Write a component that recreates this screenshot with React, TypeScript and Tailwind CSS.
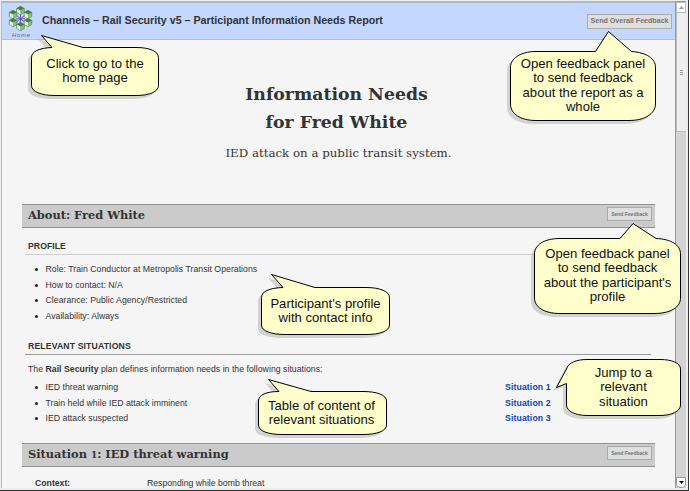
import type { ReactNode } from "react";

type CalloutProps = {
  box: string;
  text: string;
  width: number;
  height: number;
  path: string;
  children: ReactNode;
};

function Callout({ box, text, width, height, path, children }: CalloutProps) {
  return (
    <div className={`absolute ${box}`}>
      <svg width={width} height={height} className="absolute left-0 top-0 overflow-visible" fill="none">
        <path d={path} fill="#777" fillOpacity="0.27" transform="translate(-3.5 3.5)" />
        <path d={path} fill="#ffffcc" stroke="#000" strokeWidth="1" strokeLinejoin="miter" />
      </svg>
      <div className={`relative whitespace-nowrap text-center text-[13.1px] leading-[14.4px] text-[#111] ${text}`}>
        {children}
      </div>
    </div>
  );
}

function HomeLogo() {
  const cubes = [[20.5, 10.5], [13, 14.5], [28, 14.5], [13, 22.5], [28, 22.5], [20.5, 26.5]];
  return (
    <svg width="40" height="39" viewBox="0 0 40 39" className="shrink-0">
      <g stroke="#6457b8" strokeWidth="1">
        <path d="M20.5 13v11M16.500 15.500l8 6.500M24.500 15.500l-8 6.500M16 18.700h9" />
      </g>
      {cubes.map(([x, y]) => (
        <g key={`${x}-${y}`} transform={`translate(${x} ${y})`}>
          <path d="M0-4.200 3.900-2.100 3.700 2 0 4.200-3.700 2-3.900-2.100Z" fill="#5d9851" stroke="#517b55" strokeWidth=".6" />
          <path d="M0-4 3.600-2.100 0-.2-3.600-2.100Z" fill="#3f8230" />
          <path d="M-3.400-1.700 0 0V3.900L-3.400 1.900Z" fill="#e0f1dc" />
          <path d="M3.400-1.700 0 0V3.900L3.400 1.900Z" fill="#8fb88b" />
        </g>
      ))}
      <text x="12" y="36.5" fontFamily="Liberation Sans, sans-serif" fontSize="5.8" fontStyle="italic" fill="#59647a" textLength="18">Home</text>
    </svg>
  );
}

function SectionBar({ children }: { children: ReactNode }) {
  return (
    <div className="ml-5 flex h-6 w-[633px] shrink-0 items-center justify-between border-y border-[#929292] bg-[#cbcbcb] pl-[6px] pr-[3px]">
      <h2 className="font-['DejaVu_Serif',serif] text-[11.4px] font-bold leading-none text-[#333]">{children}</h2>
      <button className="mb-[4px] h-[14px] w-[45px] whitespace-nowrap border border-[#aaa] bg-[#dedede] text-[5px] font-bold leading-none text-[#737373]">Send Feedback</button>
    </div>
  );
}

function Bullet({ children }: { children: ReactNode }) {
  return (
    <li className="flex h-[15.6px] items-center">
      <span className="mr-[7.5px] size-[3px] rounded-full bg-[#222]" />
      <span>{children}</span>
    </li>
  );
}

export default function App() {
  return (
    <div className="relative h-[491px] w-[690px] overflow-hidden bg-white font-['Liberation_Sans',Arial,sans-serif] text-[#333]">
      <div className="flex h-[491px] w-[689px] border-b border-r border-[#333] bg-[#ececec] pl-px pt-px">
        <main className="flex h-[487px] w-[674px] flex-col overflow-hidden border-l border-t-2 border-l-[#bbb] border-t-[#adb7c5] bg-[#f5f5f5]">
          <header className="flex h-[37px] shrink-0 items-center border-b border-[#b3bfd1] bg-[#c3d7ff]">
            <div className="-mt-[3px] h-[39px] w-[40px] -translate-x-[2px]"><HomeLogo /></div>
            <h1 className="whitespace-nowrap pb-px text-[10.7px] font-bold">Channels – Rail Security v5 – Participant Information Needs Report</h1>
            <button className="ml-auto mr-[3px] h-[15px] w-[85px] whitespace-nowrap border border-[#aaa] bg-[#dedede] pt-px text-[7.1px] font-bold leading-none text-[#737373]">Send Overall Feedback</button>
          </header>
          <div className="flex h-[164px] shrink-0 flex-col items-center pt-[40px] text-center font-['DejaVu_Serif',serif]">
            <div className="-ml-[4px] text-[17.3px] font-bold leading-[28px]">Information Needs<br />for Fred White</div>
            <div className="mt-[7px] text-[11.8px] leading-5">IED attack on a public transit system.</div>
          </div>
          <SectionBar>About: Fred White</SectionBar>
          <section className="ml-[23px] mr-[24px] h-[110px] shrink-0 text-[8.7px] tracking-[0.03px]">
            <h3 className="flex h-[27px] items-end border-b border-[#cfcfcf] pb-px pl-[3px] font-bold">PROFILE</h3>
            <ul className="pl-[10px] pt-[7px]">
              <Bullet>Role: Train Conductor at Metropolis Transit Operations</Bullet>
              <Bullet>How to contact: N/A</Bullet>
              <Bullet>Clearance: Public Agency/Restricted</Bullet>
              <Bullet>Availability: Always</Bullet>
            </ul>
          </section>
          <section className="ml-[23px] mr-[24px] h-[105px] shrink-0 text-[8.7px] tracking-[0.03px]">
            <h3 className="flex h-[17px] items-end border-b border-[#999] pb-px pl-[3px] font-bold tracking-[0.12px]">RELEVANT SITUATIONS</h3>
            <p className="pl-[3px] pt-[8px] leading-[12px]">The <b>Rail Security</b> plan defines information needs in the following situations:</p>
            <div className="flex pl-[10px] pt-[5px]">
              <ul className="w-[470px]">
                <Bullet>IED threat warning</Bullet>
                <Bullet>Train held while IED attack imminent</Bullet>
                <Bullet>IED attack suspected</Bullet>
              </ul>
              <div className="font-bold leading-[15.6px] tracking-[0.12px] text-[#0d45b5]">
                <div>Situation 1</div><div>Situation 2</div><div>Situation 3</div>
              </div>
            </div>
          </section>
          <SectionBar>Situation <span className="text-[9px]">1</span>: IED threat warning</SectionBar>
          <div className="flex pl-[33px] pt-[11px] text-[8.7px] leading-[11px]">
            <b className="w-[112px]">Context:</b><span>Responding while bomb threat</span>
          </div>
        </main>
        <aside className="flex h-[487px] w-[11px] flex-col border-l border-t border-[#999] bg-[#d3d3d3]">
          <div className="flex h-[11px] items-center justify-center border border-[#bbb] bg-white">
            <svg width="5" height="3"><path d="M0 3 2.5 0 5 3" fill="#999" /></svg>
          </div>
          <div className="flex h-[119px] flex-col items-center justify-center gap-px border-b border-l border-[#bbb] bg-[#eee]">
            <i className="h-px w-[3px] bg-[#999]" /><i className="h-px w-[3px] bg-[#999]" /><i className="h-px w-[3px] bg-[#999]" />
          </div>
          <div className="mt-auto flex h-[11px] items-center justify-center rounded-b-sm border border-[#999] bg-white">
            <svg width="5" height="3"><path d="M0 0H5L2.5 3" fill="#111" /></svg>
          </div>
        </aside>
      </div>

      <Callout box="left-[31px] top-[35px]" text="w-[128px] pt-[22px]" width={128} height={61}
        path="M10.5 .5 52 12.5H105C119 12.5 127.5 16.5 127.5 22.5V50.5C127.5 56.5 119 60.5 105 60.5H24C10 60.5 .5 56.5 .5 50.5V22.5C.5 16.5 8 13 21 12.5Z">
        Click to go to the<br />home page
      </Callout>
      <Callout box="left-[510px] top-[31px]" text="w-[146px] pt-[26px]" width={146} height={90}
        path="M98.5 .5 121.5 20.5C137 21.5 145.5 28 145.5 36V73C145.5 82.5 135 89.5 119 89.5H26C10 89.5 .5 82.5 .5 73V36C.5 28 10 20.5 26 20.5H85.5Z">
        Open feedback panel<br />to send feedback<br />about the report as a<br />whole
      </Callout>
      <Callout box="left-[261px] top-[274px]" text="w-[129px] pt-[23px]" width={129} height={61}
        path="M10.5 .5 54 13.5H105C119 13.5 128.5 17.5 128.5 23.5V51C128.5 57 119 60.5 105 60.5H24C10 60.5 .5 57 .5 51V23.5C.5 17.5 8 14 22 13.5Z">
        Participant's profile<br />with contact info
      </Callout>
      <Callout box="left-[534px] top-[223px]" text="w-[147px] pt-[24px]" width={147} height={91}
        path="M99 .5 122 15.5C137 16 146.5 22 146.5 31V75C146.5 84 137 90.5 120 90.5H26C10 90.5 .5 84 .5 75V31C.5 22 10 15.5 26 15.5H86Z">
        Open feedback panel<br />to send feedback<br />about the participant's<br />profile
      </Callout>
      <Callout box="left-[258px] top-[379px]" text="w-[127px] pt-[20px]" width={129} height={56}
        path="M10.5 .5 53 12.5H105C119 12.5 128.5 16 128.5 22V46C128.5 52 119 55.5 105 55.5H24C10 55.5 .5 52 .5 46V22C.5 16 8 12.5 21 12.5Z">
        Table of content of<br />relevant situations
      </Callout>
      <Callout box="left-[556px] top-[359px]" text="ml-[10px] w-[115px] pt-[7px]" width={125} height={57}
        path="M.5 28.5 10.5 10C12 4 20 .5 31 .5H104C116 .5 124.5 4 124.5 10V46C124.5 52 116 56.5 104 56.5H31C19 56.5 10.5 52 10.5 46V24.5Z">
        Jump to a<br />relevant<br />situation
      </Callout>
    </div>
  );
}
